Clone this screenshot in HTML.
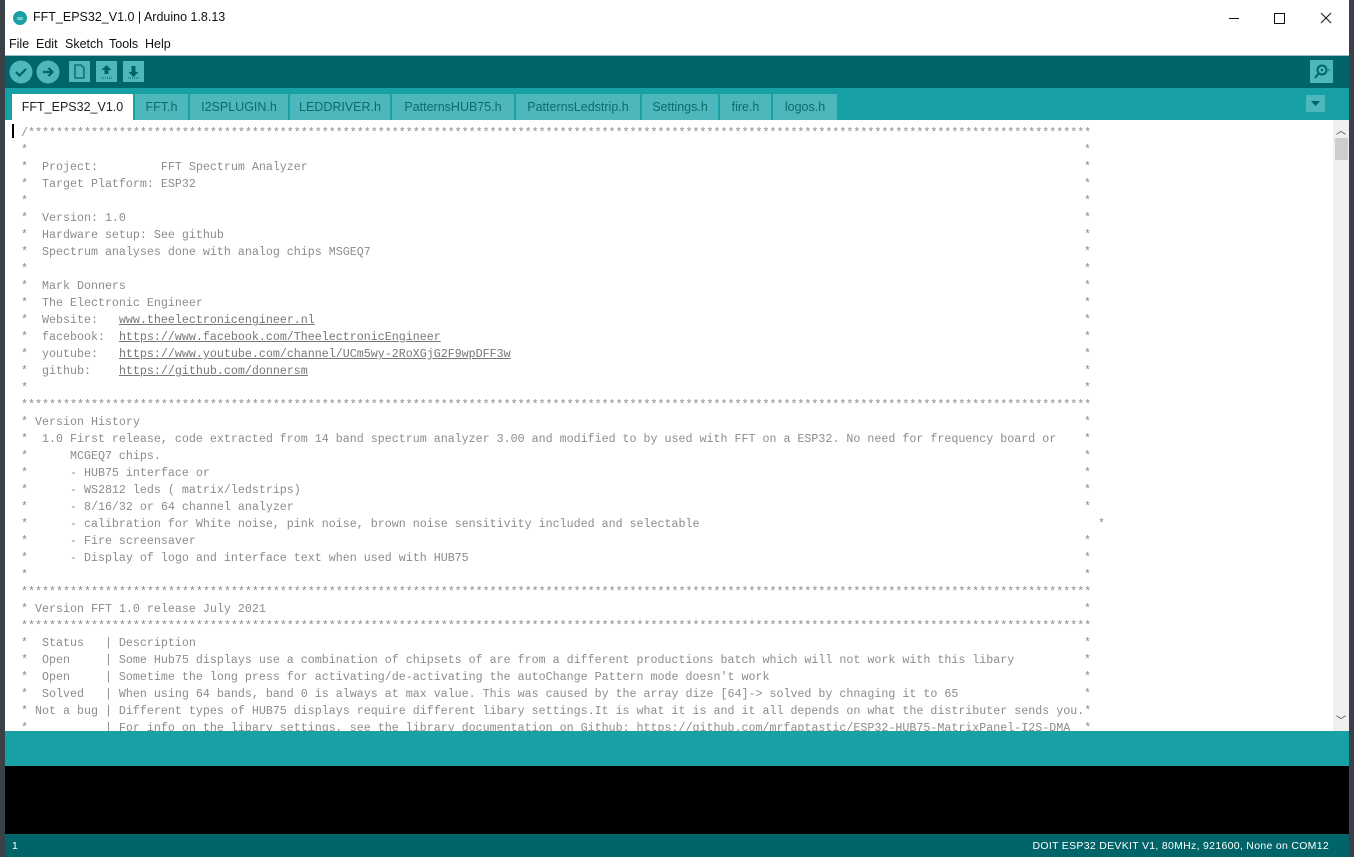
<!DOCTYPE html>
<html><head><meta charset="utf-8"><style>
*{margin:0;padding:0;box-sizing:border-box}
body{width:1354px;height:857px;overflow:hidden;background:#3a4048;position:relative;font-family:"Liberation Sans",sans-serif}
#win{position:absolute;left:5px;top:0;width:1344px;height:857px;background:#fff}
.abs{position:absolute}
#title{left:0;top:0;width:1344px;height:35px;background:#fff;font-size:12.5px;color:#111}
#menu{left:0;top:35px;width:1344px;height:20px;font-size:12.5px;color:#111}
#menu span{position:absolute;top:2px}
#tool{left:0;top:55px;width:1344px;height:33px;background:#006468;border-top:1px solid #9bc}
#tabs{left:0;top:88px;width:1344px;height:32px;background:#17a1a5}
.tab{position:absolute;top:6px;height:26px;background:#4db7bb;color:#0e6a6d;font-size:12.5px;text-align:center;line-height:27px}
.tab.act{background:#fff;color:#222}
#ed{left:0;top:120px;width:1344px;height:611px;background:#fff;overflow:hidden}
pre{position:absolute;left:16px;top:5px;font-family:"Liberation Mono",monospace;font-size:11.67px;line-height:17px;color:#8c8c8c}
pre u{color:#777}
.es{position:absolute;font-family:"Liberation Mono",monospace;font-size:11.67px;color:#8c8c8c;left:1079px}
#sb{left:1328px;top:0;width:16px;height:611px;background:#f0f0f0}
#band{left:0;top:731px;width:1344px;height:35px;background:#17a1a5}
#con{left:0;top:766px;width:1344px;height:68px;background:#000}
#stat{left:0;top:834px;width:1344px;height:23px;background:#006468;color:#fff;font-size:10.5px}
</style></head><body>
<div id="win">
<div id="title" class="abs">
 <svg class="abs" style="left:8px;top:11px" width="14" height="14"><circle cx="7" cy="7" r="7" fill="#17a1a5"/><text x="7" y="10" font-size="8" fill="#fff" text-anchor="middle" font-family="Liberation Sans">∞</text></svg>
 <span class="abs" style="left:28px;top:10px">FFT_EPS32_V1.0 | Arduino 1.8.13</span>
 <svg class="abs" style="left:1224px;top:12px" width="110" height="14" stroke="#111" fill="none" stroke-width="1"><line x1="0" y1="6.5" x2="10" y2="6.5"/><rect x="45.5" y="1.5" width="10" height="10"/><line x1="92" y1="1" x2="102" y2="11"/><line x1="102" y1="1" x2="92" y2="11"/></svg>
</div>
<div id="menu" class="abs"><span style="left:4px">File</span><span style="left:31px">Edit</span><span style="left:60px">Sketch</span><span style="left:104px">Tools</span><span style="left:140px">Help</span></div>
<div id="tool" class="abs">
 <svg class="abs" style="left:4px;top:4px" width="145" height="24">
  <circle cx="12" cy="12" r="11.5" fill="#4db7bb"/><path d="M7 12l3.5 3.5L17 9" stroke="#006468" stroke-width="2.2" fill="none"/>
  <circle cx="39" cy="12" r="11.5" fill="#4db7bb"/><path d="M34 12h9M39.5 8l4 4-4 4" stroke="#006468" stroke-width="2.2" fill="none"/>
  <rect x="60" y="1" width="21" height="21" fill="#4db7bb"/><path d="M66 5h6l3 3v10h-9z" fill="none" stroke="#006468" stroke-width="1.3"/>
  <rect x="87" y="1" width="21" height="21" fill="#4db7bb"/><path d="M97.5 5l-5 5h3v4h4v-4h3z" fill="#006468"/><line x1="92" y1="18" x2="103" y2="18" stroke="#006468" stroke-dasharray="1 1"/>
  <rect x="114" y="1" width="21" height="21" fill="#4db7bb"/><path d="M124.5 17l-5-5h3V6h4v6h3z" fill="#006468"/><line x1="119" y1="18" x2="130" y2="18" stroke="#006468" stroke-dasharray="1 1"/>
 </svg>
 <svg class="abs" style="left:1305px;top:4px" width="23" height="23"><rect width="23" height="23" fill="#4db7bb"/><circle cx="12" cy="10" r="4.5" fill="none" stroke="#006468" stroke-width="2"/><line x1="9" y1="13" x2="5" y2="18" stroke="#006468" stroke-width="2"/><circle cx="12" cy="10" r="1.2" fill="#006468"/><circle cx="19" cy="10" r="0.8" fill="#006468"/></svg>
</div>
<div id="tabs" class="abs">
 <div class="tab act" style="left:7px;width:121px">FFT_EPS32_V1.0</div>
 <div class="tab" style="left:130px;width:53px">FFT.h</div>
 <div class="tab" style="left:185px;width:98px">I2SPLUGIN.h</div>
 <div class="tab" style="left:285px;width:100px">LEDDRIVER.h</div>
 <div class="tab" style="left:387px;width:122px">PatternsHUB75.h</div>
 <div class="tab" style="left:511px;width:124px">PatternsLedstrip.h</div>
 <div class="tab" style="left:637px;width:76px">Settings.h</div>
 <div class="tab" style="left:715px;width:51px">fire.h</div>
 <div class="tab" style="left:768px;width:64px">logos.h</div>
 <svg class="abs" style="left:1301px;top:7px" width="19" height="17"><rect width="19" height="17" fill="#4db7bb"/><path d="M5 6h9l-4.5 5z" fill="#006468"/></svg>
</div>
<div id="ed" class="abs">
<div class="abs" style="left:7px;top:4px;width:2px;height:14px;background:#000"></div>
<pre>/********************************************************************************************************************************************************
*
*  Project:         FFT Spectrum Analyzer
*  Target Platform: ESP32
*
*  Version: 1.0
*  Hardware setup: See github
*  Spectrum analyses done with analog chips MSGEQ7
*
*  Mark Donners
*  The Electronic Engineer
*  Website:   <u>www.theelectronicengineer.nl</u>
*  facebook:  <u>https://www.facebook.com/TheelectronicEngineer</u>
*  youtube:   <u>https://www.youtube.com/channel/UCm5wy-2RoXGjG2F9wpDFF3w</u>
*  github:    <u>https://github.com/donnersm</u>
*
*********************************************************************************************************************************************************
* Version History
*  1.0 First release, code extracted from 14 band spectrum analyzer 3.00 and modified to by used with FFT on a ESP32. No need for frequency board or
*      MCGEQ7 chips.
*      - HUB75 interface or
*      - WS2812 leds ( matrix/ledstrips)
*      - 8/16/32 or 64 channel analyzer
*      - calibration for White noise, pink noise, brown noise sensitivity included and selectable
*      - Fire screensaver
*      - Display of logo and interface text when used with HUB75
*
*********************************************************************************************************************************************************
* Version FFT 1.0 release July 2021
*********************************************************************************************************************************************************
*  Status   | Description
*  Open     | Some Hub75 displays use a combination of chipsets of are from a different productions batch which will not work with this libary
*  Open     | Sometime the long press for activating/de-activating the autoChange Pattern mode doesn't work
*  Solved   | When using 64 bands, band 0 is always at max value. This was caused by the array dize [64]-> solved by chnaging it to 65
* Not a bug | Different types of HUB75 displays require different libary settings.It is what it is and it all depends on what the distributer sends you.*
*           | For info on the libary settings, see the library documentation on Github: https://github.com/mrfaptastic/ESP32-HUB75-MatrixPanel-I2S-DMA  *</pre>
<div class="es" style="top:22px;line-height:17px">*<br>*<br>*<br>*<br>*<br>*<br>*<br>*<br>*<br>*<br>*<br>*<br>*<br>*<br>*<br><br>*<br>*<br>*<br>*<br>*<br>*<br><br>*<br>*<br>*<br><br>*<br><br>*<br>*<br>*<br>*</div>
<div class="es" style="top:396px;left:1093px;line-height:17px">*</div>
<div id="sb" class="abs"><div class="abs" style="left:2px;top:18px;width:13px;height:22px;background:#cdcdcd"></div><span class="abs" style="left:3px;top:2px;font-size:10px;color:#333">︿</span><span class="abs" style="left:3px;top:592px;font-size:10px;color:#333">﹀</span></div>
</div>
<div id="band" class="abs"></div>
<div id="con" class="abs"></div>
<div id="stat" class="abs"><span class="abs" style="left:7px;top:6px">1</span><span class="abs" style="right:20px;top:6px;letter-spacing:0.3px">DOIT ESP32 DEVKIT V1, 80MHz, 921600, None on COM12</span></div>
</div>
</body></html>
